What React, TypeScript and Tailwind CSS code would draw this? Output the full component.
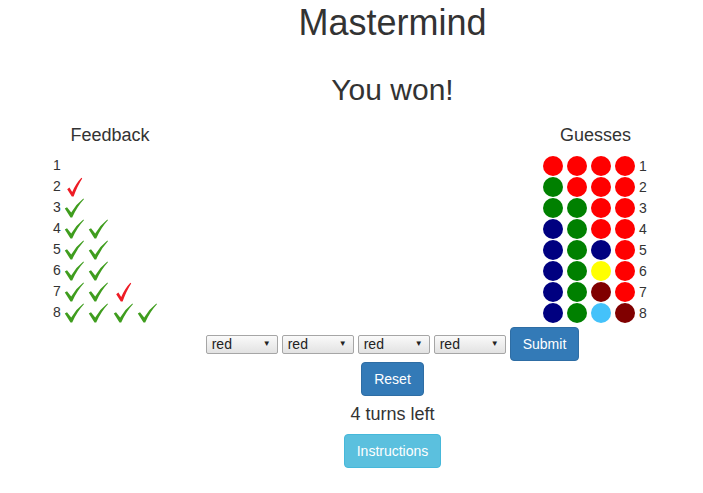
import React from 'react';

const feedback: string[][] = [
  [],
  ['red'],
  ['green'],
  ['green', 'green'],
  ['green', 'green'],
  ['green', 'green'],
  ['green', 'green', 'red'],
  ['green', 'green', 'green', 'green'],
];

const guesses: string[][] = [
  ['#ff0000', '#ff0000', '#ff0000', '#ff0000'],
  ['#008000', '#ff0000', '#ff0000', '#ff0000'],
  ['#008000', '#008000', '#ff0000', '#ff0000'],
  ['#000080', '#008000', '#ff0000', '#ff0000'],
  ['#000080', '#008000', '#000080', '#ff0000'],
  ['#000080', '#008000', '#ffff00', '#ff0000'],
  ['#000080', '#008000', '#800000', '#ff0000'],
  ['#000080', '#008000', '#44c2fa', '#800000'],
];

const GreenCheck = () => (
  <svg width="20" height="20" viewBox="0 0 20 20" className="shrink-0">
    <path
      d="M0.8 10.6 L3 9.3 L7.2 14.4 Q12.2 6.2 19.4 0.6 L19.9 1.3 Q13.4 8.2 8.2 19.4 L6.5 19.4 Z"
      fill="#3f9d1e"
    />
  </svg>
);

const RedCheck = () => (
  <svg width="20" height="20" viewBox="0 0 20 20" className="shrink-0">
    <path
      d="M3.2 12.2 L5.4 10.6 L8.2 15 Q12 6.4 17.4 0.8 L18.2 1.6 Q13.6 8.6 9.6 19.6 L7.8 19.6 Z"
      fill="#ee1c25"
    />
  </svg>
);

const FakeSelect = () => (
  <div className="flex h-[19px] w-[72px] items-center justify-between rounded-[2px] border border-[#a6a6a6] bg-gradient-to-b from-[#fafafa] to-[#e2e2e2] pl-[5px] pr-[6px] text-[14px] leading-none text-[#222]">
    <span>red</span>
    <span className="text-[8px]">▼</span>
  </div>
);

export default function App() {
  return (
    <div className="min-h-[493px] w-[703px] bg-white text-[#333] font-['Liberation_Sans',Arial,sans-serif]">
      <div className="pl-[82px] text-center">
        <h1 className="pt-[3px] text-[36px] leading-[1.1]">Mastermind</h1>
        <h2 className="mt-[30px] text-[30px] leading-[1.1]">You won!</h2>
      </div>

      <div className="mt-[20px] flex justify-between pl-[53px] pr-[55px]">
        <div className="w-[114px]">
          <h4 className="text-center text-[18px] leading-[1.1]">Feedback</h4>
          <div className="mt-[10px] flex flex-col">
            {feedback.map((row, i) => (
              <div key={i} className="flex h-[21px] items-center text-[14px]">
                <span className="w-[11px]">{i + 1}</span>
                <div className="flex gap-[4.3px]">
                  {row.map((c, j) => (c === 'green' ? <GreenCheck key={j} /> : <RedCheck key={j} />))}
                </div>
              </div>
            ))}
          </div>
        </div>

        <div className="w-[105px]">
          <h4 className="text-center text-[18px] leading-[1.1]">Guesses</h4>
          <div className="mt-[11px] flex flex-col gap-px">
            {guesses.map((row, i) => (
              <div key={i} className="flex h-[20px] items-center gap-[4px] text-[14px]">
                {row.map((c, j) => (
                  <div key={j} className="h-[20px] w-[20px] rounded-full" style={{ backgroundColor: c }} />
                ))}
                <span>{i + 1}</span>
              </div>
            ))}
          </div>
        </div>
      </div>

      <div className="flex flex-col items-center pl-[82px]">
        <div className="mt-[4px] flex items-center gap-[4px]">
          <FakeSelect />
          <FakeSelect />
          <FakeSelect />
          <FakeSelect />
          <button className="h-[34px] rounded-[4px] border border-[#2e6da4] bg-[#337ab7] px-[12px] text-[14px] text-white">
            Submit
          </button>
        </div>
        <button className="mt-px h-[34px] rounded-[4px] border border-[#2e6da4] bg-[#337ab7] px-[12px] text-[14px] text-white">
          Reset
        </button>
        <p className="mt-[9px] text-[18px] leading-[1.1]">4 turns left</p>
        <button className="mt-[9px] h-[34px] rounded-[4px] border border-[#46b8da] bg-[#5bc0de] px-[12px] text-[14px] text-white">
          Instructions
        </button>
      </div>
    </div>
  );
}
